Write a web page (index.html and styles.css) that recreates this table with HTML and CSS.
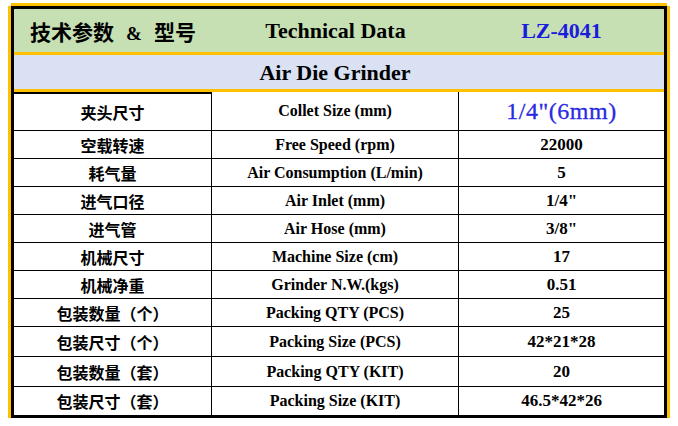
FILE: index.html
```html
<!DOCTYPE html>
<html lang="zh-CN">
<head>
<meta charset="utf-8">
<title>LZ-4041 Technical Data</title>
<link rel="stylesheet" href="styles.css">
</head>
<body>
<div class="sheet">
  <div class="head">
    <div class="head-cn">技术参数<span class="amp">&amp;</span>型号</div>
    <div class="head-en">Technical Data</div>
    <div class="head-model">LZ-4041</div>
  </div>
  <div class="title">Air Die Grinder</div>
  <table class="data">
    <colgroup><col class="c1"><col class="c2"><col class="c3"></colgroup>
    <tbody>
      <tr class="r-first"><td class="cn first">夹头尺寸</td><td class="en">Collet Size (mm)</td><td class="val big">1/4"(6mm)</td></tr>
      <tr class="r28"><td class="cn">空载转速</td><td class="en">Free Speed (rpm)</td><td class="val">22000</td></tr>
      <tr class="r28"><td class="cn">耗气量</td><td class="en">Air Consumption (L/min)</td><td class="val">5</td></tr>
      <tr class="r28"><td class="cn">进气口径</td><td class="en">Air Inlet (mm)</td><td class="val">1/4"</td></tr>
      <tr class="r28"><td class="cn">进气管</td><td class="en">Air Hose (mm)</td><td class="val">3/8"</td></tr>
      <tr class="r28"><td class="cn">机械尺寸</td><td class="en">Machine Size (cm)</td><td class="val">17</td></tr>
      <tr class="r28"><td class="cn">机械净重</td><td class="en">Grinder N.W.(kgs)</td><td class="val">0.51</td></tr>
      <tr class="r28"><td class="cn">包装数量（个）</td><td class="en">Packing QTY (PCS)</td><td class="val">25</td></tr>
      <tr class="r30"><td class="cn">包装尺寸（个）</td><td class="en">Packing Size (PCS)</td><td class="val">42*21*28</td></tr>
      <tr class="r30"><td class="cn">包装数量（套）</td><td class="en">Packing QTY (KIT)</td><td class="val">20</td></tr>
      <tr class="r28 last"><td class="cn">包装尺寸（套）</td><td class="en">Packing Size (KIT)</td><td class="val">46.5*42*26</td></tr>
    </tbody>
  </table>
</div>
</body>
</html>
```

FILE: styles.css
```css
html, body {
  margin: 0;
  padding: 0;
  background: #ffffff;
}

body {
  padding: 6px 0 0 11px;
  font-family: "Liberation Serif", "Noto Sans CJK SC", serif;
  color: #000;
}

.sheet {
  box-sizing: border-box;
  width: 656px;
  height: 412px;
  border: 3px solid #000;
  box-shadow: 0 -3px 0 0 #ffc000, -3px 0 0 0 #ffc000, 3px 0 0 0 #ffc000, 0 3px 0 0 #ffc000;
  display: flex;
  flex-direction: column;
}

.head {
  box-sizing: border-box;
  flex: 0 0 46px;
  height: 46px;
  background: #c6e0b4;
  border-bottom: 3px solid #ffc000;
  display: grid;
  grid-template-columns: 198px 247px 205px;
  align-items: center;
  text-align: center;
  font-weight: bold;
}

.head-cn {
  font-family: "Noto Sans CJK SC", sans-serif;
  font-size: 21px;
  font-weight: bold;
  padding-top: 1px;
}

.amp {
  font-family: "Liberation Serif", serif;
  margin: 0 12px;
  font-size: 19px;
}

.head-en {
  font-size: 22px;
}

.head-model {
  font-size: 22px;
  color: #1c1cdc;
}

.title {
  box-sizing: border-box;
  flex: 0 0 37px;
  height: 37px;
  background: #d9e1f2;
  border-bottom: 3px solid #ffc000;
  display: flex;
  align-items: center;
  justify-content: center;
  font-weight: bold;
  font-size: 22px;
  padding-top: 2px;
  padding-right: 8px;
}

.data {
  width: 650px;
  border-collapse: separate;
  border-spacing: 0;
  table-layout: fixed;
}

.c1 { width: 198px; }
.c2 { width: 247px; }
.c3 { width: 205px; }

.data td {
  padding: 0;
  text-align: center;
  vertical-align: middle;
  border-bottom: 1px solid #000;
  white-space: nowrap;
}

.data td.cn,
.data td.en {
  border-right: 1px solid #000;
}

.data tr.last td {
  border-bottom: none;
}

.r-first { height: 39px; }
.r28 { height: 28px; }
.r30 { height: 30px; }

.data td.first {
  border-top: 2px solid #000;
}

.cn {
  font-family: "Noto Sans CJK SC", sans-serif;
  font-size: 16px;
  font-weight: bold;
}

.en {
  font-weight: bold;
  font-size: 16px;
}

.val {
  font-weight: bold;
  font-size: 17px;
}

.val.big {
  font-weight: normal;
  font-size: 24px;
  color: #2a2ae0;
  letter-spacing: 0.5px;
  -webkit-text-stroke: 0.3px #2a2ae0;
}
```
